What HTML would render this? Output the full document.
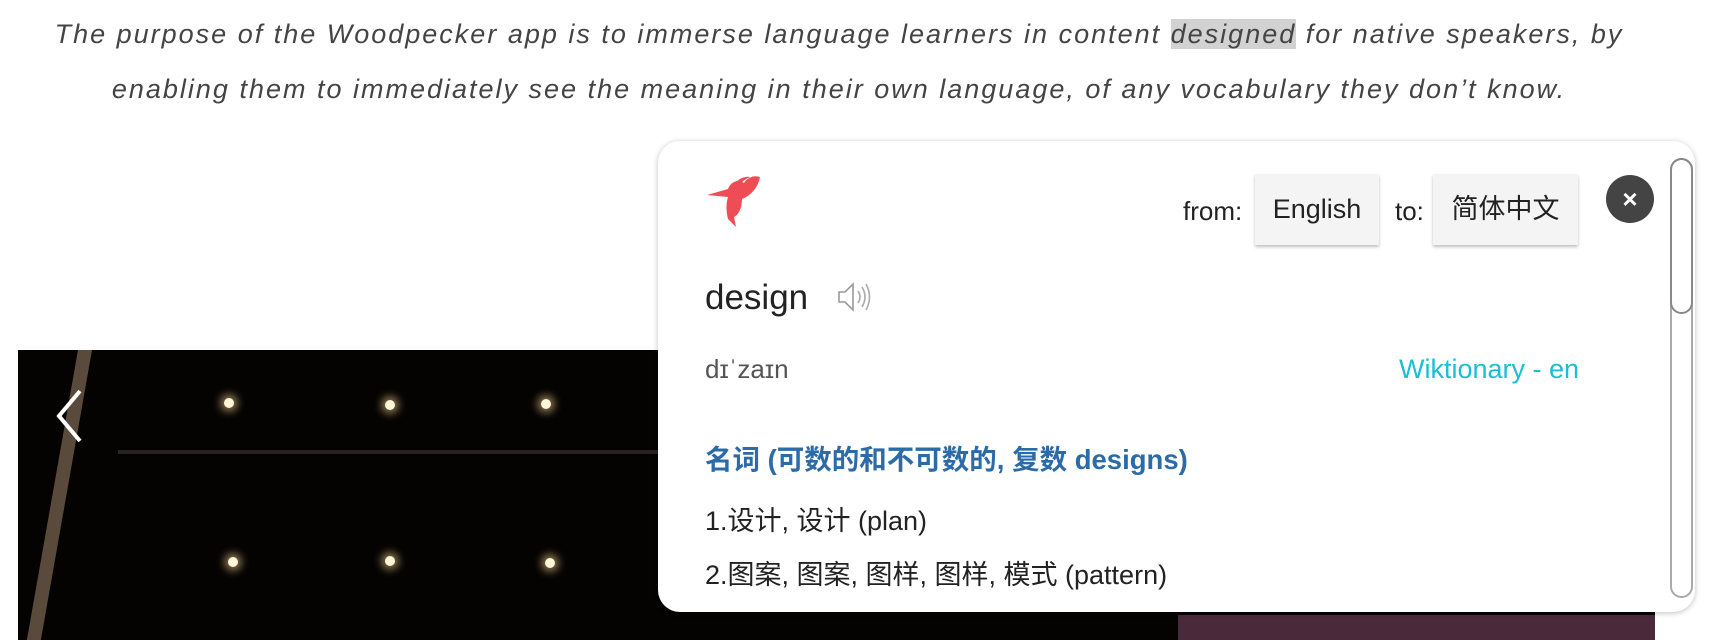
<!DOCTYPE html>
<html><head><meta charset="utf-8"><style>
html,body{margin:0;width:1726px;height:640px;overflow:hidden}
body{background:#fff;font-family:"Liberation Sans","Noto Sans CJK SC",sans-serif;position:relative}
.intro{position:absolute;left:-24px;width:1726px;text-align:center;font-style:italic;font-size:27px;letter-spacing:2px;color:#444;white-space:nowrap}
.hl{background:#d2d2d2}
.video{position:absolute;left:18px;top:350px;width:1637px;height:290px;background:#050302;overflow:hidden}
.light{position:absolute;width:10px;height:10px;border-radius:50%;background:#fff6d8;box-shadow:0 0 8px 4px rgba(255,220,150,.5)}
.pop{position:absolute;left:658px;top:141px;width:1037px;height:471px;background:#fff;border-radius:22px;box-shadow:0 1px 6px rgba(0,0,0,.25);overflow:hidden}
.abs{position:absolute;white-space:nowrap}
.btn{position:absolute;top:33px;height:71px;background:#f4f4f4;box-shadow:0 2px 3px rgba(0,0,0,.25);font-size:27px;color:#222;line-height:71px;text-align:center}
</style></head><body>
<div class="intro" style="top:19px">The purpose of the Woodpecker app is to immerse language learners in content <span class="hl">designed</span> for native speakers, by</div>
<div class="intro" style="top:74px">enabling them to immediately see the meaning in their own language, of any vocabulary they don’t know.</div>

<div class="video">
 <div style="position:absolute;left:60px;top:0;width:14px;height:300px;background:#5a4a3c;transform:skewX(-10deg);transform-origin:top"></div>
 <div style="position:absolute;left:100px;top:100px;width:1000px;height:4px;background:#2a2220"></div>
 <div class="light" style="left:206px;top:48px"></div>
 <div class="light" style="left:367px;top:50px"></div>
 <div class="light" style="left:523px;top:49px"></div>
 <div class="light" style="left:210px;top:207px"></div>
 <div class="light" style="left:367px;top:206px"></div>
 <div class="light" style="left:527px;top:208px"></div>
 <svg class="abs" style="left:36px;top:38px" width="30" height="56"><path d="M26 3 L5 28 L26 53" stroke="#fff" stroke-width="4" fill="none"/></svg>
 <div style="position:absolute;left:1160px;top:265px;width:477px;height:25px;background:#4a2a3a"></div>
</div>

<div class="pop">
 <svg class="abs" style="left:46px;top:32px" width="58" height="56" viewBox="0 0 58 56"><path d="M3 22 L24 16 C27 8 35 6 40 10 C44 4 50 2 56 4 C54 14 48 22 38 26 C38 36 34 42 30 44 L32 54 L24 46 C22 38 22 30 24 24 Z" fill="#f04c55"/><path d="M30 12 C34 5 42 3 46 4 C42 6 38 8 36 12Z" fill="#f04c55"/></svg>
 <div class="abs" style="left:525px;top:35px;font-size:26px;color:#222;line-height:71px">from:</div>
 <div class="btn" style="left:597px;width:124px">English</div>
 <div class="abs" style="left:737px;top:35px;font-size:26px;color:#222;line-height:71px">to:</div>
 <div class="btn" style="left:775px;width:145px">简体中文</div>
 <div class="abs" style="left:948px;top:34px;width:48px;height:48px;border-radius:50%;background:#444;color:#fff;font-size:26px;font-weight:bold;text-align:center;line-height:48px">×</div>
 <div class="abs" style="left:1012px;top:17px;width:23px;height:440px;border:2px solid #aaa;border-radius:12px;box-sizing:border-box"></div>
 <div class="abs" style="left:1012px;top:17px;width:23px;height:156px;border:2px solid #888;border-radius:12px;box-sizing:border-box"></div>
 <div class="abs" style="left:47px;top:137px;font-size:35px;color:#222">design</div>
 <svg class="abs" style="left:178px;top:140px" width="36" height="32" viewBox="0 0 36 32"><path d="M3 11 H9 L17 3 V29 L9 21 H3 Z" fill="none" stroke="#999" stroke-width="1.6"/><path d="M22 10 Q26 16 22 22 M26 6 Q32 16 26 26 M30 3 Q37 16 30 29" fill="none" stroke="#aaa" stroke-width="1.6"/></svg>
 <div class="abs" style="left:47px;top:213px;font-size:26px;color:#555">dɪˈzaɪn</div>
 <div class="abs" style="left:741px;top:213px;font-size:27px;color:#1cbdd6">Wiktionary - en</div>
 <div class="abs" style="left:47px;top:296px;font-size:27.5px;font-weight:bold;color:#2b6ca8">名词 (可数的和不可数的, 复数 designs)</div>
 <div class="abs" style="left:47px;top:358px;font-size:27px;color:#222">1.设计, 设计 (plan)</div>
 <div class="abs" style="left:47px;top:412px;font-size:27px;color:#222">2.图案, 图案, 图样, 图样, 模式 (pattern)</div>
</div>
</body></html>
